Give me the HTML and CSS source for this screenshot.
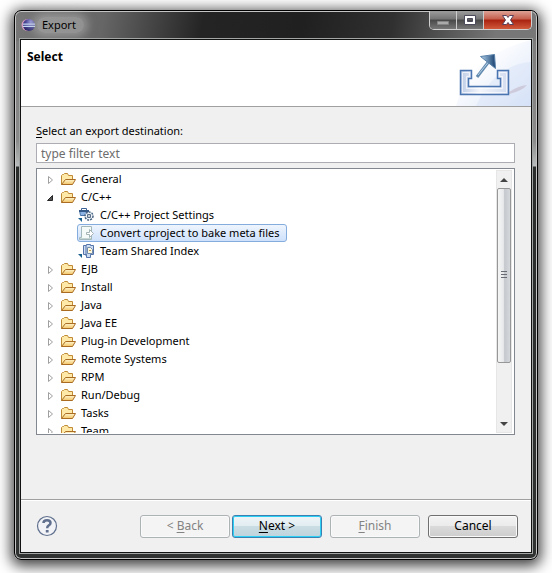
FILE: index.html
```html
<!DOCTYPE html>
<html lang="en">
<head>
<meta charset="utf-8">
<title>Export</title>
<link rel="stylesheet" href="styles.css">
</head>
<body>
<svg class="defs" aria-hidden="true">
  <defs>
    <linearGradient id="gold" x1="0" y1="0" x2="0" y2="1"><stop offset="0" stop-color="#fff6cf"/><stop offset="1" stop-color="#f3c466"/></linearGradient>
    <linearGradient id="tray" x1="0" y1="0" x2="1" y2="0"><stop offset="0" stop-color="#bccbe6"/><stop offset=".4" stop-color="#f4f6fb"/><stop offset="1" stop-color="#d2dcf0"/></linearGradient>
    <linearGradient id="arrow" x1="0" y1="0" x2="1" y2="0"><stop offset="0" stop-color="#b5d5ee"/><stop offset="1" stop-color="#17406f"/></linearGradient>
    <linearGradient id="wash" x1="0" y1="0" x2="1" y2="1"><stop offset=".3" stop-color="#fff"/><stop offset="1" stop-color="#dbe5f8"/></linearGradient>
    <radialGradient id="orb" cx=".65" cy=".25" r=".85"><stop offset="0" stop-color="#9a9ad8"/><stop offset=".45" stop-color="#4e4c9c"/><stop offset="1" stop-color="#201c58"/></radialGradient>
    <symbol id="folder" viewBox="0 0 16 16">
      <path d="M1.500 13.500V4.500L2.500 3.500H3.500L4.500 2.500H7.500L8.500 4.500H12.500V8.500" fill="#ffe9a8" stroke="#c08a35"/>
      <path d="M1.500 13.500L5.500 8.500H15.500L12.500 13.500Z" fill="url(#gold)" stroke="#a96c22"/>
    </symbol>
    <symbol id="closed" viewBox="0 0 8 10"><path d="M1.500 1.500V8.500L5.500 5Z" fill="#fff" stroke="#a0a0a0"/></symbol>
    <symbol id="open" viewBox="0 0 8 10"><path d="M5.500 2.500V7.500H.500Z" fill="#555" stroke="#262626"/></symbol>
  </defs>
</svg>
<main class="window">
  <header class="titlebar">
    <svg class="app-icon" viewBox="0 0 16 14"><circle cx="7" cy="7" r="6.500" fill="#d69bc0"/><circle cx="8.500" cy="7" r="6.500" fill="url(#orb)"/><path d="M2 6H15M2 8.500H15" stroke="#c6d8f3" stroke-width="1.200"/></svg>
    <h1>Export</h1>
    <div class="caption-buttons">
      <button class="minimize" aria-label="Minimize"><svg viewBox="0 0 12 12"><path d="M.5 7.500H11.500V10.500H.5Z" fill="#aaa" stroke="#858585"/></svg></button>
      <button class="maximize" aria-label="Maximize"><svg viewBox="0 0 12 12"><path d="M.5 1.500H11.500V10.500H.5ZM3.500 4.500V7.500H8.500V4.500Z" fill="#fff" fill-rule="evenodd" stroke="#4b4b5b"/></svg></button>
      <button class="close" aria-label="Close"><svg viewBox="0 0 12 12"><path d="M.5 1.500H4.500L6 3.500L7.500 1.500H11.500L8.500 6L11.500 10.500H7.500L6 8.500L4.500 10.500H.5L3.500 6Z" fill="#fff" stroke="#59415a"/></svg></button>
    </div>
  </header>
  <div class="client">
    <div class="banner">
      <h2>Select</h2>
      <svg class="banner-art" viewBox="0 0 75 66">
        <path d="M0 66Q12 16 75 0V66Z" fill="url(#wash)"/>
        <path d="M20 66Q38 25 75 22V66Z" fill="#cbd9f5" opacity=".3"/>
        <path d="M53 52Q62 46 71 45Q66 51 53 54Z" fill="#b69fae" opacity=".4"/>
        <path d="M4.500 30.500H15.500V38.500H12.500V46.500H44.500V38.500H41.500V30.500H52.500V54.500H4.500Z" fill="url(#tray)" stroke="#4a75b0" stroke-width="1.500"/>
        <path d="M6.500 32.500H13.500V36.500H10.500V48.500H46.500V36.500H43.500V32.500H50.500V52.500H6.500Z" fill="none" stroke="#fff" opacity=".65"/>
        <path d="M21 37L34 20" stroke="#6289ae" stroke-width="3"/><path d="M22 35L34 20" stroke="#b2d0e7"/>
        <path d="M24.500 16.500L38.500 14.500L39.500 28.500Z" fill="url(#arrow)" stroke="#5a82aa"/>
      </svg>
    </div>
    <div class="content">
      <label for="filter"><u>S</u>elect an export destination:</label>
      <input id="filter" type="text" placeholder="type filter text">
      <div class="tree-box">
        <ul class="tree" role="tree" aria-label="Export destinations">
          <li role="treeitem"><div class="row"><svg class="expander"><use href="#closed"/></svg><svg class="icon"><use href="#folder"/></svg><span>General</span></div></li>
          <li role="treeitem" aria-expanded="true"><div class="row"><svg class="expander"><use href="#open"/></svg><svg class="icon"><use href="#folder"/></svg><span>C/C++</span></div>
            <ul role="group">
              <li role="treeitem"><div class="row child"><svg class="icon" viewBox="0 0 16 16"><path d="M3.500 3.500V1.500H8.500V3.500" fill="none" stroke="#3b6295"/><path d="M1.500 3.500H10.500V8.500H2.500Z" fill="#8bb4e4" stroke="#4a76ad"/><path d="M1 4H11" stroke="#355a88" stroke-width="2"/><circle cx="11" cy="9" r="4" fill="#eef3f8" stroke="#48627f" stroke-width="1.500" stroke-dasharray="2 1"/><path d="M8 6L14 12M14 6L8 12" stroke="#8297b0"/><circle cx="11" cy="9" r="1.500" fill="#fff" stroke="#405873"/><path d="M0 11H4V15Z" fill="#175f8c"/></svg><span>C/C++ Project Settings</span></div></li>
              <li role="treeitem" aria-selected="true"><div class="row child selected"><svg class="icon" viewBox="0 0 16 16"><path d="M3.500 1.500H13.500V14.500H1.500V12.500H3.500Z" fill="#f3faf8" stroke="#a3b8ba"/><path d="M2 13.500H13" stroke="#c5d5d4"/><path d="M8.500 7.500H11.500V4.500L15.500 8.500L11.500 12.500V9.500H8.500Z" fill="#fff" stroke="#a4b4b6"/></svg><span>Convert cproject to bake meta files</span></div></li>
              <li role="treeitem"><div class="row child"><svg class="icon" viewBox="0 0 16 16"><path d="M5.500 2.500H8.500V1.500H12.500V2.500H15.500V11.500H12.500V14.500H8.500V11.500H5.500Z" fill="#cbdcf2" stroke="#5574aa"/><path d="M8 3V13" stroke="#5574aa"/><path d="M9.500 4.500H12.500L14.500 6.500V10.500H9.500Z" fill="#fff9df" stroke="#738cad"/><path d="M11 7.500H13" stroke="#c29b4d"/><path d="M0 11H4V15Z" fill="#175f8c"/></svg><span>Team Shared Index</span></div></li>
            </ul>
          </li>
          <li role="treeitem"><div class="row"><svg class="expander"><use href="#closed"/></svg><svg class="icon"><use href="#folder"/></svg><span>EJB</span></div></li>
          <li role="treeitem"><div class="row"><svg class="expander"><use href="#closed"/></svg><svg class="icon"><use href="#folder"/></svg><span>Install</span></div></li>
          <li role="treeitem"><div class="row"><svg class="expander"><use href="#closed"/></svg><svg class="icon"><use href="#folder"/></svg><span>Java</span></div></li>
          <li role="treeitem"><div class="row"><svg class="expander"><use href="#closed"/></svg><svg class="icon"><use href="#folder"/></svg><span>Java EE</span></div></li>
          <li role="treeitem"><div class="row"><svg class="expander"><use href="#closed"/></svg><svg class="icon"><use href="#folder"/></svg><span>Plug-in Development</span></div></li>
          <li role="treeitem"><div class="row"><svg class="expander"><use href="#closed"/></svg><svg class="icon"><use href="#folder"/></svg><span>Remote Systems</span></div></li>
          <li role="treeitem"><div class="row"><svg class="expander"><use href="#closed"/></svg><svg class="icon"><use href="#folder"/></svg><span>RPM</span></div></li>
          <li role="treeitem"><div class="row"><svg class="expander"><use href="#closed"/></svg><svg class="icon"><use href="#folder"/></svg><span>Run/Debug</span></div></li>
          <li role="treeitem"><div class="row"><svg class="expander"><use href="#closed"/></svg><svg class="icon"><use href="#folder"/></svg><span>Tasks</span></div></li>
          <li role="treeitem"><div class="row"><svg class="expander"><use href="#closed"/></svg><svg class="icon"><use href="#folder"/></svg><span>Team</span></div></li>
        </ul>
        <div class="scrollbar">
          <button aria-label="Scroll up"><svg viewBox="0 0 8 4"><path d="M0 4L4 0L8 4Z" fill="#444"/></svg></button>
          <div class="track"><div class="thumb"><svg viewBox="0 0 8 8"><path d="M1 .5H7M1 3.500H7M1 6.500H7" stroke="#676c74"/></svg></div></div>
          <button aria-label="Scroll down"><svg viewBox="0 0 8 4"><path d="M0 0L4 4L8 0Z" fill="#444"/></svg></button>
        </div>
      </div>
    </div>
    <footer>
      <button class="help" aria-label="Help"><svg viewBox="0 0 22 22"><circle cx="11" cy="11" r="9.500" fill="#f2f3f6" stroke="#60708e" stroke-width="1.200"/><path d="M7.500 8Q7.500 5.200 11 5.200Q14.500 5.200 14.500 8Q14.500 9.700 12.500 10.700Q11.200 11.400 11.200 13.200" fill="none" stroke="#60708e" stroke-width="2.500"/><path d="M9.800 15H12.600V17.500H9.800Z" fill="#60708e"/></svg></button>
      <div class="actions">
        <div class="pair"><button class="button" disabled>&lt; <u>B</u>ack</button><button class="button primary"><u>N</u>ext &gt;</button></div>
        <button class="button" disabled><u>F</u>inish</button>
        <button class="button">Cancel</button>
      </div>
    </footer>
  </div>
</main>
</body>
</html>
```
FILE: styles.css
```css
* { box-sizing: border-box; }
body {
  margin: 0;
  min-height: 100vh;
  padding: 10px 14px 13px;
  display: flex;
  overflow: hidden;
  background: #fff;
  color: #000;
  font: 12px/16px "Noto Sans", "Open Sans", sans-serif;
}
button, input { font: inherit; color: inherit; margin: 0; }
h1, h2 { margin: 0; font-size: 12px; }
ul { margin: 0; padding: 0; list-style: none; }
svg { display: block; flex: none; }
u { text-underline-offset: 2px; }
label, .tree, .titlebar h1 { font-size: 11px; }
.defs { position: absolute; width: 0; height: 0; }

.window {
  flex: 1;
  min-width: 0;
  display: flex;
  flex-direction: column;
  padding: 0 5px 6px;
  border: 1px solid #000;
  border-radius: 7px;
  background:
    linear-gradient(100deg, #777 0, #666 17%, #242424 36%, #202020 55%, #303030 72%, #777 92%) 0 0 / 100% 30px no-repeat,
    linear-gradient(#777, #8b8b8b 130px, #b9bcbc 155px, #2b2d2d 156px, #303232 100%);
  box-shadow: inset 0 0 0 1px #c4c4c4, 0 3px 14px 3px rgba(0, 0, 0, .75);
}
.titlebar { display: flex; height: 28px; padding-left: 1px; align-items: center; }
.app-icon { width: 15px; height: 14px; }
.titlebar h1 {
  margin-left: 1px;
  padding: 0 8px 0 5px;
  font-weight: 400;
  border-radius: 8px;
  background: rgba(185, 185, 185, .5);
  box-shadow: 0 0 8px 4px rgba(185, 185, 185, .5);
}
.caption-buttons {
  display: flex;
  align-self: flex-start;
  height: 19px;
  margin-left: auto;
  border: 1px solid #d0d0d0;
  border-top: 0;
  border-radius: 0 0 5px 5px;
  overflow: hidden;
}
.caption-buttons button {
  display: grid;
  place-items: center;
  width: 27px;
  padding: 0;
  border: 0;
  border-right: 1px solid #ccc;
  background: linear-gradient(#9c9c9c, #747474 45%, #484848 50%, #777);
}
.caption-buttons svg { width: 12px; height: 12px; }
.caption-buttons .close {
  width: 47px;
  border: 0;
  background: linear-gradient(#dda296, #c65d4b 45%, #a92210 50%, #d15a3b);
}

.client {
  flex: 1;
  display: flex;
  flex-direction: column;
  border: 1px solid #111;
  outline: 1px solid #a2a5a5;
  background: #f0f0f0;
}
.banner {
  display: flex;
  justify-content: space-between;
  height: 67px;
  background: #fff;
  border-bottom: 1px solid #a0a0a0;
}
.banner h2 { padding: 9px 6px; }
.banner-art { width: 75px; height: 66px; }
.content {
  flex: 1;
  display: flex;
  flex-direction: column;
  padding: 16px 16px 64px 15px;
}
input {
  width: 100%;
  height: 20px;
  margin: 4px 0 5px;
  padding: 0 4px;
  border: 1px solid #abadb3;
  background: #fff;
  outline: 0;
}
input::placeholder { color: #6d6d6d; opacity: 1; }
.tree-box {
  flex: 1 1 0;
  min-height: 0;
  display: flex;
  justify-content: space-between;
  padding: 1px 2px 1px 9px;
  border: 1px solid #828790;
  background: #fff;
  overflow: hidden;
}
.tree { height: 100%; overflow: hidden; }
.row { display: flex; align-items: center; height: 18px; white-space: nowrap; }
.expander { width: 8px; height: 10px; margin: 2px 5px 0 1px; }
.icon { width: 16px; height: 16px; }
.row span { padding: 0 3px 0 5px; }
.child { width: max-content; margin-left: 31px; padding-right: 3px; border: 1px solid transparent; }
.child span { padding-left: 6px; }
.selected {
  border-color: #84acdd;
  border-radius: 3px;
  background: linear-gradient(#eff5fe, #cee1fb);
}
.scrollbar { width: 16px; display: flex; flex-direction: column; border: 1px solid #e6e6e6; background: #f0f0f0; }
.scrollbar button { display: grid; place-items: center; height: 17px; padding: 0; border: 0; background: transparent; }
.scrollbar button svg { width: 8px; height: 4px; }
.track { flex: 1; }
.thumb {
  display: grid;
  place-items: center;
  height: 77%;
  border: 1px solid #979797;
  border-radius: 2px;
  background: linear-gradient(90deg, #f5f5f5, #e7e9eb 45%, #c5c9ce 55%, #d5d8db);
}
.thumb svg { width: 8px; height: 8px; }
footer {
  display: flex;
  align-items: center;
  justify-content: space-between;
  height: 53px;
  padding: 0 13px 0 15px;
  border-top: 1px solid #a0a0a0;
  box-shadow: inset 0 1px #fff;
}
.help { padding: 0; border: 0; background: transparent; }
.help svg { width: 22px; height: 22px; }
.actions { display: flex; gap: 8px; }
.pair { display: flex; gap: 2px; }
.button {
  width: 90px;
  height: 23px;
  padding: 0;
  border: 1px solid #707070;
  border-radius: 3px;
  background: linear-gradient(#f3f3f3, #ebebeb 48%, #dadada 50%, #cdcdcd);
  box-shadow: inset 0 0 0 1px #fafafa;
}
.button:disabled { color: #838383; border-color: #adb2b5; background: #f4f4f4; }
.primary {
  border-color: #3c7fb1;
  background: linear-gradient(#edf4f7, #e2edf1 48%, #cbdde4 50%, #bdd3dc);
  box-shadow: inset 0 0 0 1px #2bd0f5;
}
```
